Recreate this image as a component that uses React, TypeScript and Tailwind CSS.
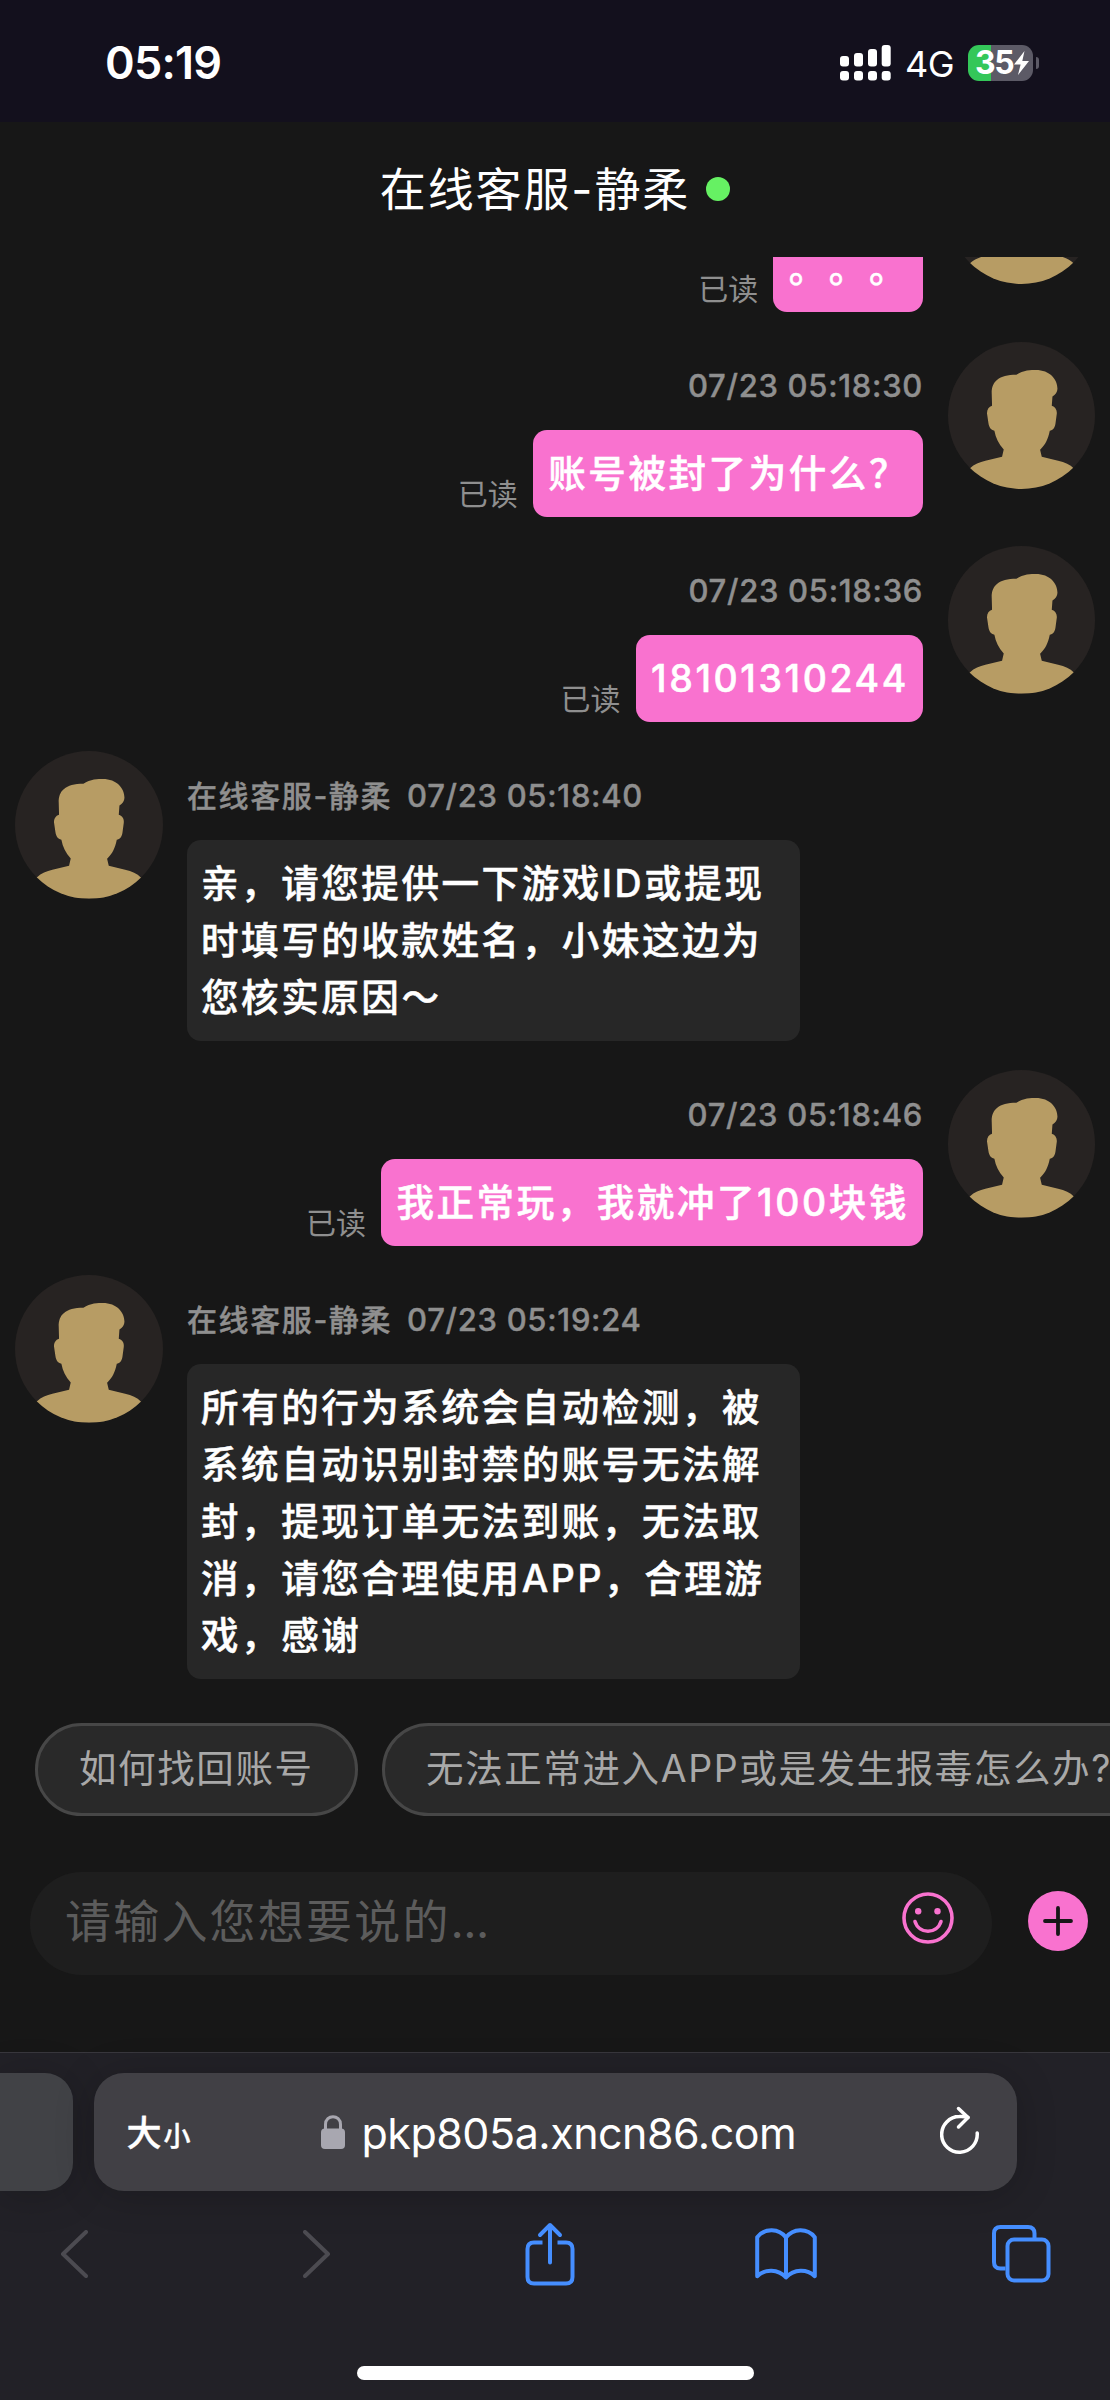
import clsx from 'clsx';

interface Message {
  id: number;
  from: 'me' | 'agent';
  time?: string;
  lines: string[];
}

const AGENT_NAME = '在线客服-静柔';

const messages: Message[] = [
  { id: 1, from: 'me', lines: ['。。。'] },
  { id: 2, from: 'me', time: '07/23 05:18:30', lines: ['账号被封了为什么？'] },
  { id: 3, from: 'me', time: '07/23 05:18:36', lines: ['18101310244'] },
  {
    id: 4,
    from: 'agent',
    time: '07/23 05:18:40',
    lines: ['亲，请您提供一下游戏ID或提现', '时填写的收款姓名，小妹这边为', '您核实原因～'],
  },
  { id: 5, from: 'me', time: '07/23 05:18:46', lines: ['我正常玩，我就冲了100块钱'] },
  {
    id: 6,
    from: 'agent',
    time: '07/23 05:19:24',
    lines: [
      '所有的行为系统会自动检测，被',
      '系统自动识别封禁的账号无法解',
      '封，提现订单无法到账，无法取',
      '消，请您合理使用APP，合理游',
      '戏，感谢',
    ],
  },
];

const quickReplies = ['如何找回账号', '无法正常进入APP或是发生报毒怎么办?'];

const Avatar = () => (
  <div className="size-[147.5px] shrink-0 overflow-hidden rounded-full bg-[#272322]">
    <svg viewBox="0 0 442 442" className="size-full" fill="#b79c64">
      <path d="M132 191 L131 155 C130 120 150 98 205 98 C225 84 250 84 263 84 C305 84 328 112 328 140 C328 150 322 158 313 163 L311 191 C322 194 327 204 326 215 L322 245 C320 258 314 264 305 266 C300 290 292 308 276 323 L281 344 L330 356 C350 360 366 368 377 379 L442 442 L0 442 L66 378 C78 367 95 360 112 356 L162 344 L167 322 C152 305 143 288 139 266 C128 263 123 256 121 242 L117 215 C116 203 122 194 132 191 Z" />
    </svg>
  </div>
);

const Bubble = ({ message }: { message: Message }) => (
  <div
    className={clsx(
      'rounded-[14px] py-[14.75px] text-[37.5px] leading-[57px] font-medium tracking-[2.58px] whitespace-nowrap text-white [-webkit-text-stroke:0.5px_#fff] [text-spacing-trim:space-all]',
      message.from === 'me' ? 'bg-[#f972cf] pr-3.5 pl-[15.5px]' : 'w-[612.5px] bg-[#272727] pl-3.5',
    )}
  >
    {message.lines.map((line) => (
      <p key={line}>{line}</p>
    ))}
  </div>
);

const MessageRow = ({ message }: { message: Message }) => {
  const mine = message.from === 'me';
  return (
    <div className={clsx('flex shrink-0 gap-[24.5px] px-[15px] pb-[29.5px]', mine && 'flex-row-reverse')}>
      <Avatar />
      <div className={clsx('flex flex-col', mine ? 'items-end' : 'items-start')}>
        <div className="flex h-[88.9px] items-center gap-[15px] pt-px text-[30px] font-medium text-[#8f8f8f] [-webkit-text-stroke:0.4px_#8f8f8f]">
          {!mine && <span className="tracking-[1.6px]">{AGENT_NAME}</span>}
          {message.time && <span className="text-[31px] tracking-[0.7px]">{message.time}</span>}
        </div>
        <div className="flex items-end gap-[15px]">
          {mine && <span className="pb-0.5 text-[30px] leading-[42px] text-[#8f8f8f]">已读</span>}
          <Bubble message={message} />
        </div>
      </div>
    </div>
  );
};

const StatusBar = () => (
  <div className="flex h-[122px] shrink-0 items-center justify-between bg-[#13101d] pt-[3px] pr-[71px] pl-[105px] text-white">
    <span className="pt-px text-[45px] font-semibold tracking-[-0.8px]">05:19</span>
    <div className="flex items-center gap-[14px]">
      <svg width="51" height="36" viewBox="0 0 51 36" fill="#fff">
        <rect x="0" y="11" width="9" height="10.5" rx="3" />
        <rect x="14" y="8" width="9" height="13.5" rx="3" />
        <rect x="28" y="4" width="9" height="17.5" rx="3" />
        <rect x="41.7" y="0" width="9" height="21.5" rx="3" />
        <rect x="0" y="26" width="9" height="9.5" rx="3" />
        <rect x="14" y="26" width="9" height="9.5" rx="3" />
        <rect x="28" y="26" width="9" height="9.5" rx="3" />
        <rect x="41.7" y="26" width="9" height="9.5" rx="3" />
      </svg>
      <span className="pt-0.5 text-[36px] leading-9 tracking-[-0.5px]">4G</span>
      <div className="flex items-center gap-[3px]">
        <div className="flex h-9 w-[65px] items-center rounded-[11px] bg-linear-to-r from-[#34c759] from-35% to-[#5c5a66] to-35% pl-[7px]">
          <span className="text-[32px] font-bold tracking-[-1.5px]">35</span>
          <svg width="17" height="26" viewBox="0 0 17 26" fill="#fff" className="shrink-0">
            <path d="M11.5 1 L1 14.5 H7.6 L5 25 L16 11 H9.3 Z" />
          </svg>
        </div>
        <div className="h-3 w-[3px] rounded-r-full bg-[#5c5a66]" />
      </div>
    </div>
  </div>
);

const BrowserBar = () => (
  <div className="flex h-[348px] shrink-0 flex-col border-t border-[#38373d] bg-[#222127]">
    <div className="mt-5 flex h-[117.5px] gap-[21px]">
      <div className="w-[72.5px] rounded-r-[28px] bg-[#414246] shadow-[0_4px_40px_rgba(0,0,0,0.2)]" />
      <div className="flex w-[923px] items-center rounded-[30px] bg-[#414045] pl-[33px] text-white shadow-[0_4px_40px_rgba(0,0,0,0.2)]">
        <span className="flex w-[194px] items-baseline gap-0.5 pt-0.5 font-medium [-webkit-text-stroke:0.4px_#fff]">
          <span className="text-[35px]">大</span>
          <span className="text-[27px]">小</span>
        </span>
        <svg width="24" height="34" viewBox="0 0 24 34" className="shrink-0">
          <rect x="0" y="13.5" width="24" height="20.5" rx="4" fill="#a8a7b0" />
          <path d="M4.5 15 V9.5 C4.5 -0.8 19.5 -0.8 19.5 9.5 V15" fill="none" stroke="#a8a7b0" strokeWidth="3" />
        </svg>
        <span className="ml-[17px] w-[578px] pt-0.5 text-[43px] tracking-[-0.5px]">pkp805a.xncn86.com</span>
        <svg width="40" height="48" viewBox="0 0 40 48" fill="none" stroke="#fff" strokeWidth="3.5" strokeLinecap="round" strokeLinejoin="round" className="mb-[3px] shrink-0">
          <path d="M37.2 27 A17.8 17.8 0 1 1 19.5 10.6 Q24 10.2 28 11.5" />
          <path d="M18.5 2.5 L28 11.5 L18.5 21" />
        </svg>
      </div>
    </div>
    <div className="mt-[31.5px] flex h-[64px] items-center pl-[60px]">
      <svg width="28" height="48" viewBox="0 0 28 48" fill="none" stroke="#4c4b51" strokeWidth="4" strokeLinecap="round" strokeLinejoin="round">
        <path d="M26 2 L3 24 L26 46" />
      </svg>
      <svg width="28" height="48" viewBox="0 0 28 48" fill="none" stroke="#4c4b51" strokeWidth="4" strokeLinecap="round" strokeLinejoin="round" className="ml-[215px]">
        <path d="M2 2 L25 24 L2 46" />
      </svg>
      <svg width="50" height="64" viewBox="0 0 50 64" fill="none" stroke="#458eff" strokeWidth="4" strokeLinecap="round" strokeLinejoin="round" className="ml-[194px]">
        <path d="M17.5 20.5 H9 Q2.5 20.5 2.5 27 V55 Q2.5 61.5 9 61.5 H41 Q47.5 61.5 47.5 55 V27 Q47.5 20.5 41 20.5 H32.5" strokeLinecap="butt" />
        <path d="M25 3 V40.5 M15 13 L25 3 L35 13" />
      </svg>
      <svg width="62" height="52" viewBox="0 0 62 52" fill="none" stroke="#458eff" strokeWidth="4" strokeLinecap="round" strokeLinejoin="round" className="ml-[180px]">
        <path d="M31 9.5 C24 0.5 10 -0.5 2.2 9.2 V48.2 C10 40.8 23 40.8 31 49.5 C39 40.8 52 40.8 59.8 48.2 V9.2 C52 -0.5 38 0.5 31 9.5 V49.5" />
      </svg>
      <svg width="60" height="60" viewBox="0 0 60 60" fill="none" stroke="#458eff" strokeWidth="4" className="ml-[174px]">
        <path d="M14.5 44.5 H9.5 Q3 44.5 3 38 V9.5 Q3 3 9.5 3 H37 Q43.5 3 43.5 9.5 V15" />
        <rect x="16.5" y="15.5" width="41" height="41" rx="6.5" />
      </svg>
    </div>
    <div className="mx-auto mt-20 h-[13.5px] w-[397px] rounded-full bg-white" />
  </div>
);

export default function App() {
  return (
    <div className="flex h-[2400px] w-[1110px] flex-col overflow-hidden bg-[#171717] font-[Inter,'Noto_Sans_CJK_SC',sans-serif]">
      <StatusBar />

      <header className="flex h-[135px] shrink-0 items-center justify-center gap-4 pb-px text-white">
        <h1 className="text-[46px] tracking-[1.9px]">{AGENT_NAME}</h1>
        <span className="size-6 rounded-full bg-[#66f163]" />
      </header>

      <main className="flex h-[1451px] shrink-0 flex-col justify-end overflow-hidden">
        {messages.map((message) => (
          <MessageRow key={message.id} message={message} />
        ))}
      </main>

      <div className="mt-[15px] flex h-[93px] shrink-0 gap-[24.5px] overflow-hidden pl-[35px]">
        {quickReplies.map((text) => (
          <button
            key={text}
            className="shrink-0 rounded-full border-3 border-[#474747] bg-[#292929] px-[41px] text-[37.5px] tracking-[1.6px] whitespace-nowrap text-[#a8a8a8]"
          >
            {text}
          </button>
        ))}
      </div>

      <div className="mt-14 flex h-[103px] shrink-0 items-center pl-[30px]">
        <div className="flex h-full w-[961.5px] items-center justify-between rounded-full bg-[#1e1e1e] pr-[37.5px] pl-[35px]">
          <span className="pb-1 text-[46px] tracking-[2.2px] text-[#5c5c5c]">
            请输入您想要说的<span className="tracking-[-0.5px]">...</span>
          </span>
          <svg width="52" height="52" viewBox="0 0 52 52" fill="none" stroke="#f972cf" strokeWidth="3.6" strokeLinecap="round" className="mb-[11px]">
            <circle cx="26" cy="26" r="24" />
            <path d="M13 29.5 C17 42.5 35 42.5 39 29.5" />
            <circle cx="16.2" cy="19.2" r="3.2" fill="#f972cf" stroke="none" />
            <circle cx="35.5" cy="19.2" r="3.2" fill="#f972cf" stroke="none" />
          </svg>
        </div>
        <svg width="60" height="60" viewBox="0 0 60 60" className="mb-[5px] ml-[36.5px]">
          <circle cx="30" cy="30" r="30" fill="#f972cf" />
          <path d="M30 17 V43 M17 30 H43" stroke="#171717" strokeWidth="3.8" strokeLinecap="round" />
        </svg>
      </div>

      <div className="grow" />
      <BrowserBar />
    </div>
  );
}
